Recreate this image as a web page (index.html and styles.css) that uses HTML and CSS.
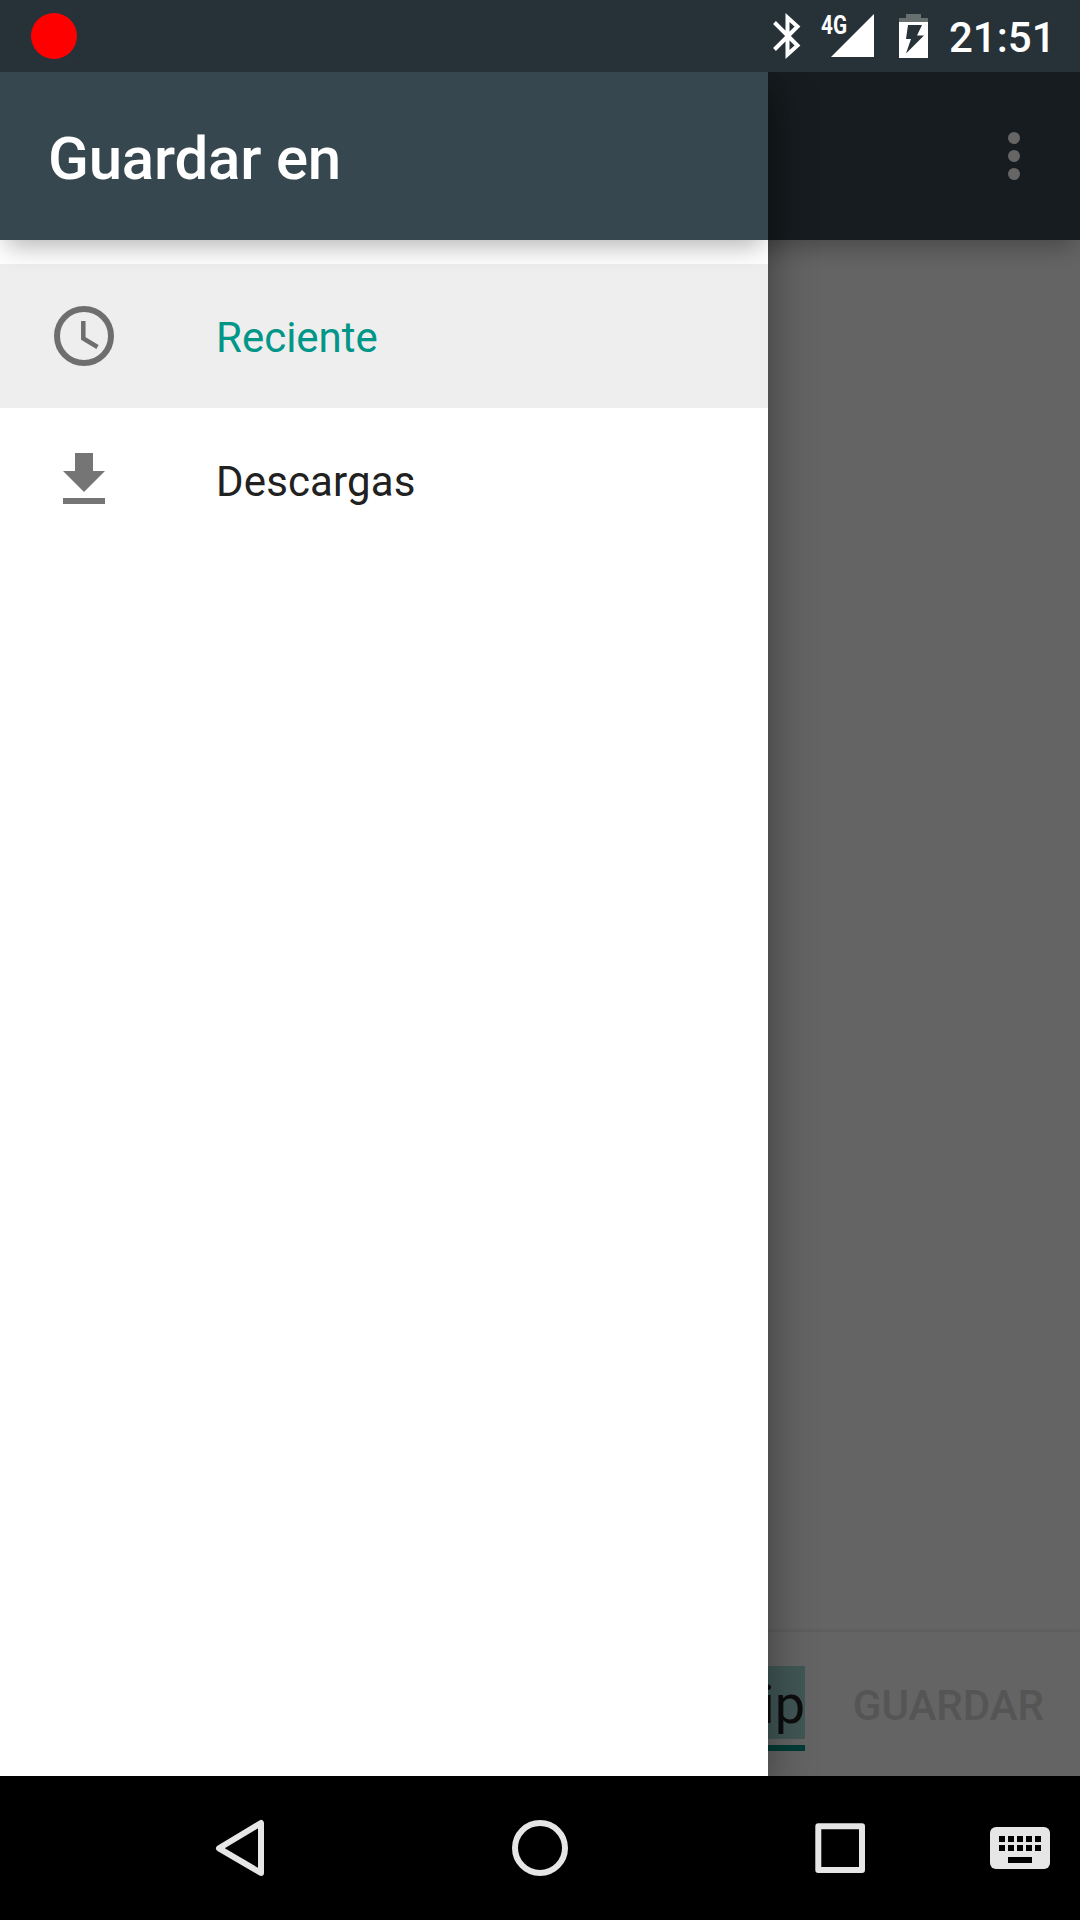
FILE: index.html
```html
<!DOCTYPE html>
<html lang="es">
<head>
<meta charset="utf-8">
<title>Guardar en</title>
<link rel="stylesheet" href="styles.css">
</head>
<body>
<div class="device">
  <header class="status">
    <span class="record"></span>
    <svg class="bluetooth" width="27" height="44" viewBox="0 0 27 44"><path d="M1.500 8.500 24.500 31.500 14.500 40.500V3.500L24.500 12.500 1.500 35.500" fill="none" stroke="#fff" stroke-width="4"/></svg>
    <svg class="signal" width="54" height="44" viewBox="0 0 54 44"><path d="M53 0V43H10Z" fill="#fff"/><text x="0" y="19.500" class="network" textLength="26" lengthAdjust="spacingAndGlyphs">4G</text></svg>
    <svg class="battery" width="29" height="44" viewBox="0 0 29 44"><path d="M0 8V4H7V0H22V4H29V8Z" fill="#68706f"/><path fill-rule="evenodd" d="M0 8H29V44H0ZM9 11 7 25H12L7 39.500 25 21.500H18L23 11Z" fill="#fff"/></svg>
    <time class="clock">21:51</time>
  </header>

  <main class="screen">
    <div class="toolbar">
      <svg width="12" height="48" viewBox="0 0 12 48" fill="#fff"><circle cx="6" cy="6" r="6"/><circle cx="6" cy="24" r="6"/><circle cx="6" cy="42" r="6"/></svg>
    </div>
    <div class="content"></div>
    <div class="savebar">
      <div class="field"><span class="filename">zip</span></div>
      <span class="save">GUARDAR</span>
    </div>
    <div class="scrim"></div>
    <aside class="drawer">
      <h1 class="title">Guardar en</h1>
      <nav class="roots">
        <div class="root selected">
          <svg width="60" height="60" viewBox="0 0 60 60" fill="none" stroke="#6e6e6e"><circle cx="30" cy="30" r="27" stroke-width="6"/><path d="M29.300 15V32.500L43.500 41" stroke-width="4.500"/></svg>
          <span>Reciente</span>
        </div>
        <div class="root">
          <svg width="60" height="60" viewBox="0 0 60 60" fill="#757575"><path d="M21 3H39V21H51L30 42 9 21H21ZM9 48H51V54H9Z"/></svg>
          <span class="downloads">Descargas</span>
        </div>
      </nav>
    </aside>
  </main>

  <footer class="navbar">
    <svg width="60" height="60" viewBox="0 0 60 60" fill="none" stroke="#e6e6e6" stroke-width="6" stroke-linejoin="round"><path d="M51 5V55L9 30.300Z"/></svg>
    <svg width="60" height="60" viewBox="0 0 60 60" fill="none" stroke="#e6e6e6" stroke-width="6"><circle cx="30" cy="30" r="25"/></svg>
    <svg width="60" height="60" viewBox="0 0 60 60" fill="none" stroke="#e6e6e6" stroke-width="6" stroke-linejoin="round"><path d="M8.300 8.300H52V52H8.300Z"/></svg>
    <svg width="60" height="42" viewBox="0 0 60 42"><rect width="60" height="42" rx="6" fill="#e6e6e6"/><path d="M9 12H51M9 21H51" stroke="#000" stroke-width="6" stroke-dasharray="6 3"/><path d="M18 30H42V36H18Z"/></svg>
  </footer>
</div>
</body>
</html>
```
FILE: styles.css
```css
* { box-sizing: border-box; }

body {
  margin: 0;
  font-family: Roboto, sans-serif;
}

.device {
  width: 1080px;
  height: 1920px;
  display: grid;
  grid-template-rows: 72px 1fr 144px;
  overflow: hidden;
}

.device svg { display: block; flex: none; overflow: visible; }

.status {
  display: flex;
  align-items: center;
  padding: 0 25px 0 31px;
  background: #263238;
  color: #fff;
}

.record {
  width: 46px;
  height: 46px;
  margin-right: auto;
  border-radius: 50%;
  background: #f00;
}

.signal { margin-left: 21px; }
.battery { margin-left: 24px; }
.network { font-size: 26px; font-weight: 700; fill: #fff; }

.clock {
  width: 106px;
  margin-left: 21px;
  padding-top: 3px;
  font-size: 42px;
  font-weight: 500;
  white-space: nowrap;
}

.screen {
  position: relative;
  display: grid;
  grid-template-rows: 168px 1fr 144px;
  min-width: 0;
  overflow: hidden;
  background: #fafafa;
}

.toolbar {
  display: flex;
  align-items: center;
  justify-content: flex-end;
  padding-right: 60px;
  background: #37474f;
  box-shadow: 0 12px 24px -6px rgba(0, 0, 0, .3);
}

.savebar {
  display: flex;
  align-items: center;
  justify-content: space-between;
  padding-right: 36px;
  background: #fafafa;
  box-shadow: 0 -1px 4px rgba(0, 0, 0, .12);
}

.field {
  width: 805px;
  height: 85px;
  margin-top: 8px;
  border-bottom: 6px solid #009688;
  text-align: right;
}

.filename {
  display: inline-block;
  height: 73px;
  padding-top: 2px;
  line-height: 73px;
  font-size: 54px;
  color: #212121;
  background: #a2dad4;
}

.save {
  padding-top: 3px;
  font-size: 42px;
  font-weight: 500;
  color: #d5d5d5;
}

.scrim {
  position: absolute;
  inset: 0;
  background: rgba(0, 0, 0, .6);
}

.drawer {
  position: absolute;
  inset: 0 auto 0 0;
  width: 768px;
  background: #fff;
  box-shadow: 0 14px 44px rgba(0, 0, 0, .42);
}

.title {
  position: relative;
  height: 168px;
  margin: 0;
  padding: 6px 48px 0;
  line-height: 162px;
  font-size: 60px;
  font-weight: 500;
  letter-spacing: -.2px;
  color: #fff;
  background: #37474f;
  box-shadow: 0 12px 24px -6px rgba(0, 0, 0, .3);
}

.roots { padding-top: 24px; }

.root {
  display: flex;
  align-items: center;
  gap: 102px;
  height: 144px;
  padding-left: 54px;
  font-size: 42px;
  color: #212121;
}

.root span { padding-top: 3px; }
.root .downloads { letter-spacing: .15px; }

.selected {
  color: #009688;
  background: #eee;
}

.navbar {
  display: grid;
  grid-template-columns: 300px 300px 300px 60px;
  place-items: center;
  padding-left: 90px;
  background: #000;
}
```
